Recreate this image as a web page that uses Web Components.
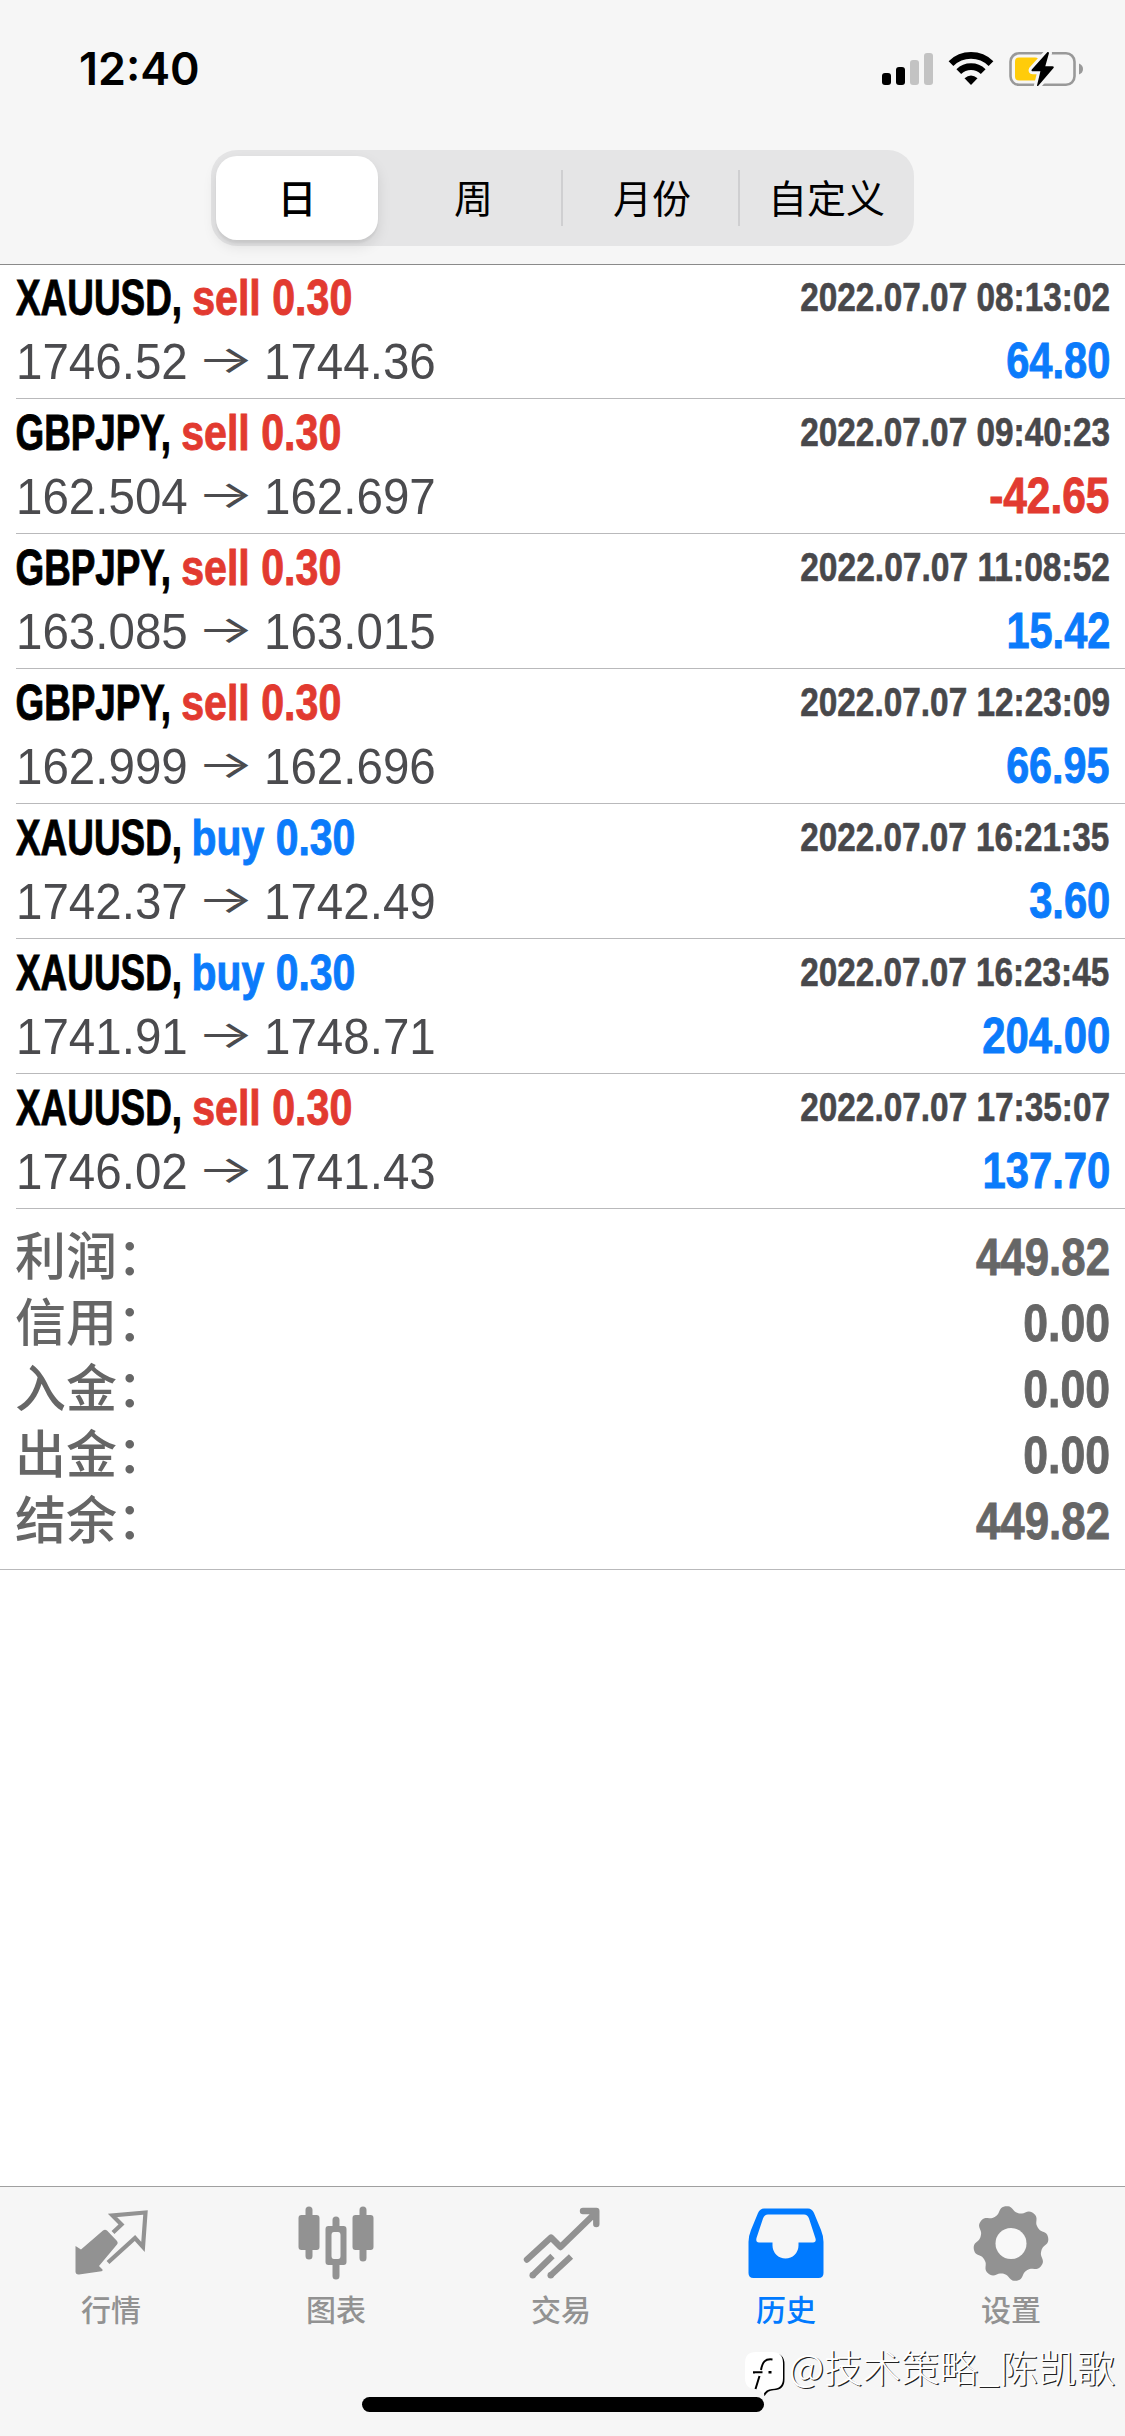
<!DOCTYPE html>
<html lang="zh-CN">
<head>
<meta charset="utf-8">
<title>历史</title>
<style>
html,body{margin:0;padding:0;background:#fff}
body{width:1125px;height:2436px;overflow:hidden;font-family:"Liberation Sans","Noto Sans CJK SC",sans-serif}
</style>
</head>
<body>
<history-app></history-app>
<script>
const canvas = document.createElement('canvas').getContext('2d');

// Text condensed horizontally so that its visible glyphs fill a given width.
class InkText extends HTMLElement {
  connectedCallback() {
    if (this.shadowRoot) return;
    this.attachShadow({mode: 'open'}).innerHTML =
      `<style>:host{display:block;flex:none;white-space:nowrap}span{display:inline-block;transform-origin:0 0}</style><span><slot></slot></span>`;
    const cs = getComputedStyle(this);
    canvas.font = `${cs.fontWeight} ${cs.fontSize} ${cs.fontFamily}`;
    const m = canvas.measureText(this.textContent);
    const w = +this.getAttribute('w');
    const k = w / (m.actualBoundingBoxRight + m.actualBoundingBoxLeft);
    this.style.width = w + 'px';
    this.shadowRoot.querySelector('span').style.transform =
      `translateX(${m.actualBoundingBoxLeft * k}px) scaleX(${k})`;
  }
}
customElements.define('ink-text', InkText);

class StatusBar extends HTMLElement {
  connectedCallback() {
    this.attachShadow({mode: 'open'}).innerHTML = `<style>
      :host{display:flex;justify-content:space-between;height:132px;padding:40px 42px 0 81px;box-sizing:border-box}
      ink-text{font:600 45px/58px Inter,sans-serif;color:#000}
      svg{display:block;margin-top:8px}
    </style>
    <ink-text w="117">12:40</ink-text>
    <svg width="202" height="44" viewBox="0 0 202 44">
      <g fill="#000"><rect x="1" y="25" width="9" height="12" rx="3"/><rect x="15" y="19" width="9" height="18" rx="3"/></g>
      <g fill="#c3c3c3"><rect x="29" y="12" width="9" height="25" rx="3"/><rect x="43" y="5" width="9" height="32" rx="3"/></g>
      <g fill="none" stroke="#000" stroke-width="6.8"><path d="M70 15.6a28.6 28.6 0 0 1 40 0"/><path d="M77.8 23.6a17.5 17.5 0 0 1 24.4 0"/></g>
      <path d="M83.500 30.200q6.500-5.200 13 0L90 37z"/>
      <rect x="129.500" y="5.300" width="64" height="31.500" rx="8.500" fill="none" stroke="#999" stroke-width="2.600"/>
      <path d="M198 15.500q4 1.500 4 5.500t-4 5.500z" fill="#999"/>
      <rect x="134" y="9.500" width="24" height="23" rx="4" fill="#ffcc0a"/>
      <path d="M166.500 4L150.800 21.500q-1 1.800 1 1.800h7.600L156 37.500q.5 1 1.500 0L172.500 20q1-1.800-1-1.800h-7.200L168 5q-.3-1.500-1.500-1z" stroke="#f6f6f6" stroke-width="6"/>
      <path d="M166.500 4L150.800 21.500q-1 1.800 1 1.800h7.600L156 37.500q.5 1 1.500 0L172.500 20q1-1.800-1-1.800h-7.200L168 5q-.3-1.500-1.500-1z"/>
    </svg>`;
  }
}
customElements.define('status-bar', StatusBar);

class SegmentControl extends HTMLElement {
  connectedCallback() {
    this.attachShadow({mode: 'open'}).innerHTML = `<style>
      :host{display:flex;align-items:center;box-sizing:border-box;width:703px;height:96px;margin:18px 0 0 211px;padding:0 0 0 5px;background:#e5e5e6;border-radius:26px;font:400 39px/80px "Noto Sans CJK SC",sans-serif;color:#000;text-align:center}
      div{width:177px;height:84px}
      .on{width:162px;height:84px;margin-right:7px;background:#fff;border-radius:21px;box-shadow:0 6px 14px rgba(0,0,0,.10),0 3px 2px rgba(0,0,0,.05);font-weight:500}
      i{width:2px;height:56px;margin:0 -1px;background:#cfcfd1}
      .m{text-indent:3px}
    </style>
    <div class="on">日</div><div>周</div><i></i><div class="m">月份</div><i></i><div style="width:175px">自定义</div>`;
  }
}
customElements.define('segment-control', SegmentControl);

class TradeRow extends HTMLElement {
  connectedCallback() {
    const [sym, sw, side, dw, from, to, date, profit, pw] = this.getAttribute('values').split('|');
    const red = '#e23a30', blue = '#0b7bfb';
    this.attachShadow({mode: 'open'}).innerHTML = `<style>
      :host{display:block;box-sizing:border-box;height:135px;margin-left:16px;padding:9px 16px 0 0;border-bottom:1px solid #b9b9bb;font-family:"Liberation Sans Narrow","Liberation Sans",sans-serif}
      .line{display:flex;justify-content:space-between;height:50px}
      .line+.line{margin-top:13px}
      .left{display:flex}
      ink-text{font-weight:700;font-size:49.5px;line-height:50px;-webkit-text-stroke:.9px currentColor}
      .sym{margin-left:${sym[0] === 'G' ? 1 : 0}px}
      .side{margin-left:${side === 'buy' ? 13.5 : 12.5}px;color:${side === 'buy' ? blue : red}}
      .date{font-size:40px;line-height:48px;color:#48484b;-webkit-text-stroke-width:.6px}
      .price{font-size:49.5px;line-height:51px;color:#4b4b4e;font-family:"Liberation Sans",sans-serif;width:172px;white-space:nowrap}
      .price span{display:inline-block;transform:scaleX(.96);transform-origin:0 0}
      .arrow{font:400 38px/46px Inter,sans-serif;color:#4b4b4e;margin:0 15px 0 15px;-webkit-text-stroke-width:0}
      .profit{color:${profit[0] === '-' ? red : blue}}
    </style>
    <div class="line"><div class="left"><ink-text class="sym" w="${sw}">${sym},</ink-text><ink-text class="side" w="${dw}">${side} 0.30</ink-text></div><ink-text class="date" w="308">${date}</ink-text></div>
    <div class="line"><div class="left"><div class="price"><span>${from}</span></div><ink-text class="arrow" w="46">→</ink-text><div class="price"><span>${to}</span></div></div><ink-text class="profit" w="${pw}">${profit}</ink-text></div>`;
  }
}
customElements.define('trade-row', TradeRow);

class SummaryRow extends HTMLElement {
  connectedCallback() {
    this.attachShadow({mode: 'open'}).innerHTML = `<style>
      :host{display:flex;justify-content:space-between;height:66px;color:#666}
      .label{font:500 51px/68px "Liberation Sans","Noto Sans CJK SC",sans-serif;margin-left:-1px}
      ink-text{font:700 52.5px/66px "Liberation Sans Narrow","Liberation Sans",sans-serif;-webkit-text-stroke:.9px currentColor}
    </style>
    <div class="label">${this.getAttribute('label')}：</div><ink-text w="${this.getAttribute('w')}">${this.getAttribute('value')}</ink-text>`;
  }
}
customElements.define('summary-row', SummaryRow);

const gear = () => {
  let d = '';
  const n = 160;
  for (let i = 0; i < n; i++) {
    const a = i / n * Math.PI * 2;
    const c = Math.cos(8 * (a + 1.72));
    const r = 34.4 + 3.2 * Math.tanh(c * 1.3) / Math.tanh(1.3);
    d += (i ? 'L' : 'M') + (38 + r * Math.cos(a)).toFixed(2) + ' ' + (38 + r * Math.sin(a)).toFixed(2);
  }
  return d + 'Z';
};
// Icon coordinates: an 80x80 box whose centre line is the tab's centre.
const icons = {
  quotes: `<path d="M4.500 39L10 42.500 32 23.500q2-1.500 4 0l10 10.500q1.500 2 0 3.500L28 59l3.500 3.500q.5 1.500-1 1.800L8 67.500q-3.500.2-3.500-3z"/><path d="M42 25.500L50.500 17.500 41.500 8.500 74.500 5.500 72 40 64 31 37 55.500" fill="none" stroke="currentColor" stroke-width="4.200"/>`,
  chart: `<path d="M9.500 8V3a3.500 3.500 0 0 1 7 0v5h4q3 0 3 3v29q0 3-3 3h-4v6a3.500 3.500 0 0 1-7 0v-6h-4q-3 0-3-3V11q0-3 3-3zM63.500 8V3a3.500 3.500 0 0 1 7 0v5h4q3 0 3 3v29q0 3-3 3h-4v8a3.500 3.500 0 0 1-7 0v-8h-4q-3 0-3-3V11q0-3 3-3z"/><path fill-rule="evenodd" d="M36.500 19V13a3.500 3.500 0 0 1 7 0v6h4q3 0 3 3v33q0 3-3 3h-4v11a3.500 3.500 0 0 1-7 0V58h-4q-3 0-3-3V22q0-3 3-3zM38 25q-2.500 0-2.500 3v21q0 3 2.500 3h4q2.500 0 2.500-3V28q0-3-2.500-3z"/>`,
  trade: `<g fill="none" stroke="currentColor" stroke-width="6.400" stroke-linecap="round" stroke-linejoin="round"><path d="M6 52.500L30 30.500 39.500 40 75 5.500M62 4H75.300V17"/></g><g fill="none" stroke="currentColor" stroke-width="6.200"><path d="M11.500 68.500L31.500 49M29.500 68.500L50 49.500"/></g><circle cx="11.700" cy="68.200" r="3.200"/><circle cx="29.700" cy="68.200" r="3.200"/>`,
  history: `<path fill-rule="evenodd" d="M18 1.500H62q4 0 6 4.500l7 17q2.500 6 2.500 12V66q0 5-5 5H7.500q-5 0-5-5V35q0-6 2.500-12L12 6q2-4.500 6-4.500zM22 7.500q-3.500 0-5 4L10.500 31q-1 4.500 2.500 4.500H26.500v3a13 13 0 0 0 26 0v-3H67q3.500 0 2.500-4L63 11.500q-1.500-4-5-4z"/>`,
  settings: `<g transform="translate(2 -1.500)"><path d="${gear()}"/><circle cx="38" cy="38" r="15.500" fill="#f8f8f8"/></g>`
};

class TabItem extends HTMLElement {
  connectedCallback() {
    this.attachShadow({mode: 'open'}).innerHTML = `<style>
      :host{display:flex;flex-direction:column;align-items:center;flex:none;width:225px;color:#929292}
      :host([active]){color:#007aff}
      svg{display:block;width:80px;height:80px;overflow:visible;fill:currentColor}
      span{font:500 30px/43px "Noto Sans CJK SC",sans-serif}
    </style><svg viewBox="0 0 80 80">${icons[this.getAttribute('icon')]}</svg><span><slot></slot></span>`;
  }
}
customElements.define('tab-item', TabItem);

class WaterMark extends HTMLElement {
  connectedCallback() {
    this.attachShadow({mode: 'open'}).innerHTML = `<style>
      :host{display:flex;position:absolute;left:744px;top:2339px;font:300 38px/54px "Noto Sans CJK SC",sans-serif;color:#fff;text-shadow:1.200px 1.200px 0.300px #222}
      svg{display:block;margin-top:12px;margin-right:6px;overflow:visible}
    </style>
    <svg width="41" height="44" viewBox="0 0 41 44">
      <path transform="translate(1.500 1.200)" d="M26 1H28Q39 1 39 12V27Q39 38 28 38 22 38 19 44 18 39 18 38z" fill="#000"/>
      <path d="M12 1H28Q39 1 39 12V27Q39 38 28 38 22 38 19 44 18 39 12 38 1 38 1 27V12Q1 1 12 1z" fill="#fff"/>
      <path d="M28.500 8.500C21 7.500 18.500 11 17 19M10 22.500V21.300H18.500M15.500 25L11.500 38" fill="none" stroke="#000" stroke-width="2"/><rect x="24.500" y="20" width="3" height="2.500"/>
    </svg>
    <ink-text w="323">@技术策略_陈凯歌</ink-text>`;
  }
}
customElements.define('water-mark', WaterMark);

class HistoryApp extends HTMLElement {
  connectedCallback() {
    const trades = [
      'XAUUSD|164|sell|158|1746.52|1744.36|2022.07.07 08:13:02|64.80|102',
      'GBPJPY|152|sell|158|162.504|162.697|2022.07.07 09:40:23|-42.65|119',
      'GBPJPY|152|sell|158|163.085|163.015|2022.07.07 11:08:52|15.42|100',
      'GBPJPY|152|sell|158|162.999|162.696|2022.07.07 12:23:09|66.95|102',
      'XAUUSD|164|buy|160|1742.37|1742.49|2022.07.07 16:21:35|3.60|79',
      'XAUUSD|164|buy|160|1741.91|1748.71|2022.07.07 16:23:45|204.00|126',
      'XAUUSD|164|sell|158|1746.02|1741.43|2022.07.07 17:35:07|137.70|124'
    ];
    const sums = [['利润', '449.82', 133], ['信用', '0.00', 84], ['入金', '0.00', 84], ['出金', '0.00', 84], ['结余', '449.82', 133]];
    this.attachShadow({mode: 'open'}).innerHTML = `<style>
      :host{display:flex;flex-direction:column;position:relative;width:1125px;height:2436px;background:#fff;overflow:hidden}
      header{height:264px;background:#f6f6f6;border-bottom:1px solid #8a8a8a}
      .list{margin-top:-1px}
      .sum{height:361px;box-sizing:border-box;padding:15px 16px 0 16px;border-bottom:1px solid #b9b9bb}
      .grow{flex:1}
      footer{height:250px;box-sizing:border-box;background:#f6f6f6;border-top:1px solid #a0a0a0}
      nav{display:flex;padding-top:20px;margin-left:-1.500px;height:190px;box-sizing:border-box}
      .home{width:402px;height:15px;border-radius:8px;background:#000;margin:20px auto 0}
    </style>
    <header><status-bar></status-bar><segment-control></segment-control></header>
    <div class="list">${trades.map(t => `<trade-row values="${t}"></trade-row>`).join('')}</div>
    <div class="sum">${sums.map(s => `<summary-row label="${s[0]}" value="${s[1]}" w="${s[2]}"></summary-row>`).join('')}</div>
    <div class="grow"></div>
    <footer><nav>
      <tab-item icon="quotes">行情</tab-item><tab-item icon="chart">图表</tab-item><tab-item icon="trade">交易</tab-item><tab-item icon="history" active>历史</tab-item><tab-item icon="settings">设置</tab-item>
    </nav><div class="home"></div></footer>
    <water-mark></water-mark>`;
  }
}
customElements.define('history-app', HistoryApp);
</script>
</body>
</html>
